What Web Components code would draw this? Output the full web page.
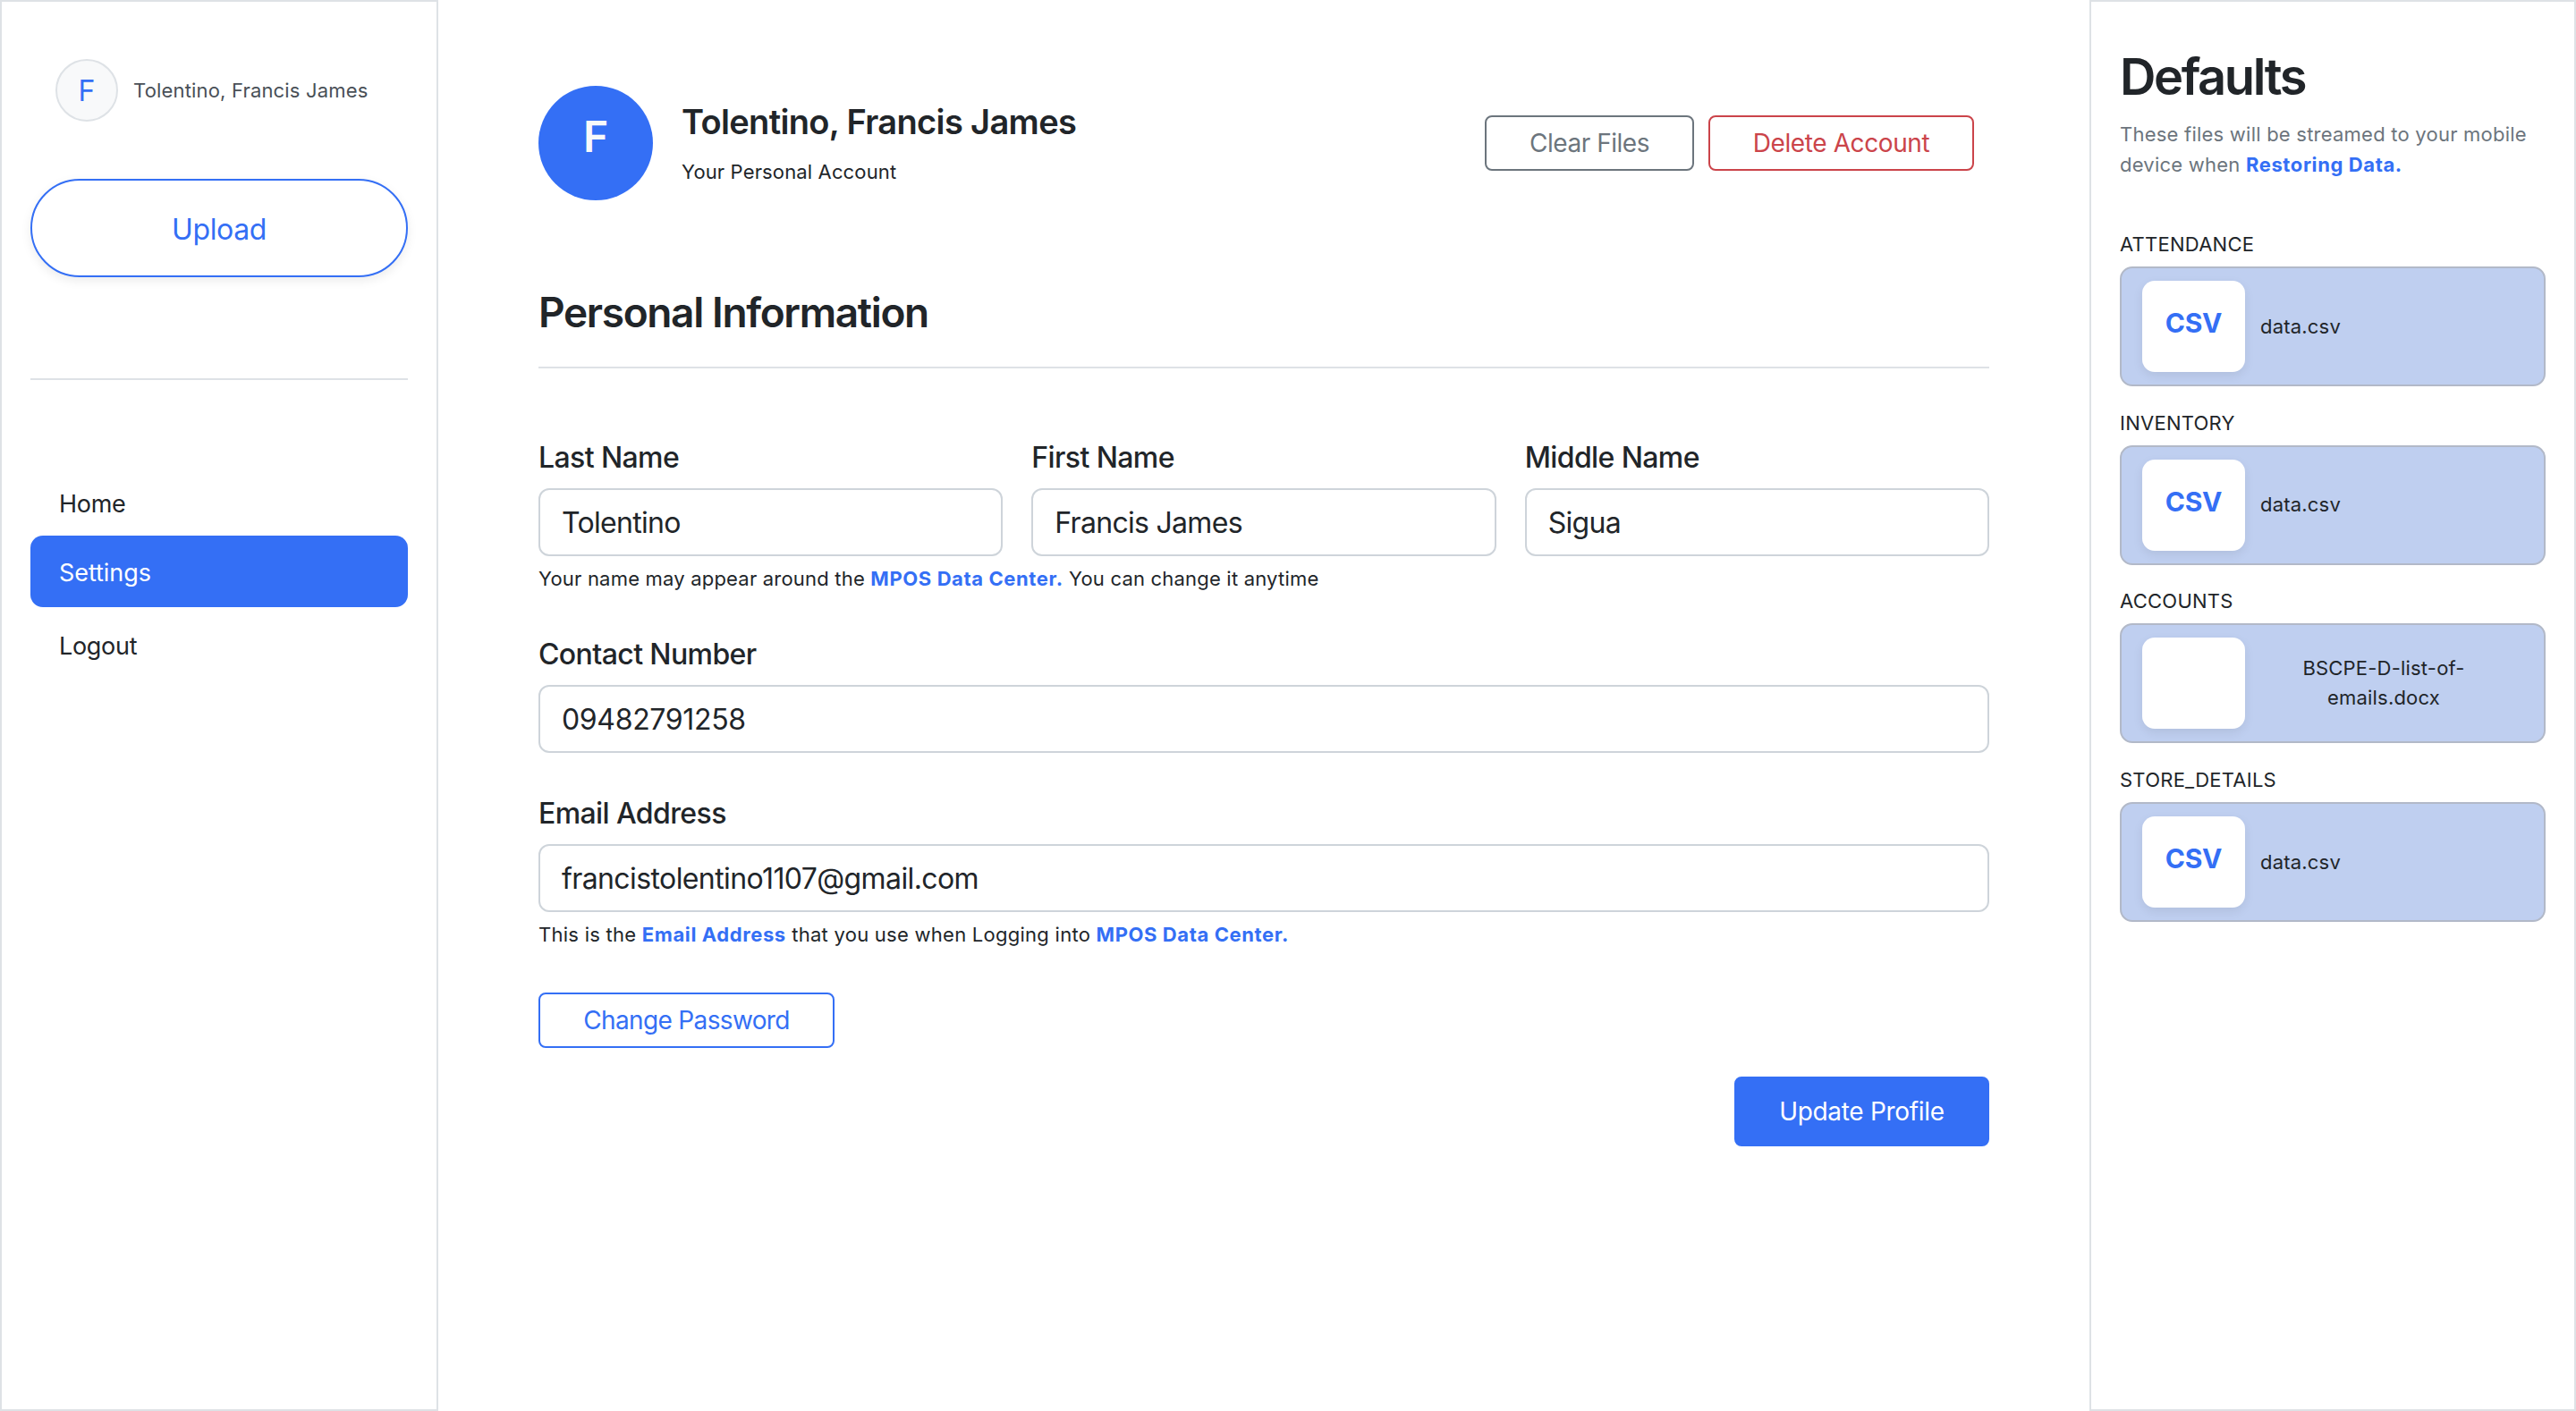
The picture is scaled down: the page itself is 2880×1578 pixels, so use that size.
<!DOCTYPE html>
<html lang="en"><head><meta charset="utf-8"><title>Settings</title>
<style>
html,body{margin:0;height:100%;background:#fff}
body{font-family:Inter,"Liberation Sans",sans-serif;color:#212529;--blue:#346ff5;--line:#dee2e6}
app-shell{height:1578px}
</style></head><body>
<app-shell>
  <side-nav slot="left"></side-nav>
  <profile-form></profile-form>
  <defaults-panel slot="right">
    <file-slot label="ATTENDANCE" name="data.csv" kind="CSV"></file-slot>
    <file-slot label="INVENTORY" name="data.csv" kind="CSV"></file-slot>
    <file-slot label="ACCOUNTS" name="BSCPE-D-list-of-emails.docx" kind=""></file-slot>
    <file-slot label="STORE_DETAILS" name="data.csv" kind="CSV"></file-slot>
  </defaults-panel>
</app-shell>
<script>
function el(name, css, html, setup){
  customElements.define(name, class extends HTMLElement{
    constructor(){super();const r=this.attachShadow({mode:'open'});r.innerHTML='<style>'+css+'</style>'+(typeof html==='function'?html(this):html);}
    connectedCallback(){ if(setup) setup(this); }
  });
}
el('app-shell',`:host{display:grid;grid-template-columns:490px 1fr 544px;box-sizing:border-box}`,
 `<slot name="left"></slot><slot></slot><slot name="right"></slot>`);

el('side-nav',`
:host{display:block;box-sizing:border-box;height:1578px;border:2px solid var(--line);padding:64px 32px 0 32px}
.me{display:flex;align-items:center;gap:17px;padding-left:28px;height:70px}
.av{width:70px;height:70px;box-sizing:border-box;border-radius:50%;border:2px solid var(--line);background:#f8f9fa;color:var(--blue);display:flex;align-items:center;justify-content:center;font-size:32px}
.nm{font-size:22px;color:#495057;letter-spacing:.17px}
.up{margin-top:64px;height:110px;box-sizing:border-box;border:2px solid var(--blue);border-radius:55px;background:#fff;color:var(--blue);font-size:32px;letter-spacing:-.4px;padding-top:2px;display:flex;align-items:center;justify-content:center;box-shadow:0 4px 12px rgba(0,0,0,.08)}
hr{border:0;height:2px;background:var(--line);margin:113px 0 0}
nav{margin-top:102px;display:flex;flex-direction:column}
a{display:flex;align-items:center;padding-left:32px;font-size:27px;letter-spacing:-.3px;border-radius:14px;color:#212529}
a.h{height:72px}
a.on{height:80px;background:var(--blue);color:#fff;padding-top:2px;box-sizing:border-box;letter-spacing:-.05px}
a.l{height:86px}
`,`<div class="me"><div class="av">F</div><div class="nm">Tolentino, Francis James</div></div>
<div class="up">Upload</div><hr>
<nav><a class="h">Home</a><a class="on">Settings</a><a class="l">Logout</a></nav>`);

el('profile-form',`
:host{display:block;box-sizing:border-box;padding:96px 112px 0 112px}
.head{display:flex;align-items:flex-start;justify-content:space-between}
.who{display:flex;gap:32px}
.av{width:128px;height:128px;border-radius:50%;background:var(--blue);color:#f8f9fa;display:flex;align-items:center;justify-content:center;font-size:48px;font-weight:600;padding-bottom:16px;box-sizing:border-box}
h1{margin:16px 0 0;font-size:38px;font-weight:600;line-height:48px;letter-spacing:-.65px}
.sub{margin:16px 0 0;font-size:22px;line-height:32px;letter-spacing:.14px}
.acts{display:flex;gap:16px;margin:33px 17px 0 0}
h2{margin:95px 0 0;font-size:46px;font-weight:600;line-height:60px;letter-spacing:-1.35px}
.rule{height:2px;background:var(--line);margin-top:31px}
.row{display:grid;grid-template-columns:repeat(3,1fr);gap:32px;margin-top:80px}
label{display:block;font-size:32px;font-weight:550;line-height:40px;margin-bottom:14px;letter-spacing:-.6px}
.v{display:flex;align-items:center;box-sizing:border-box;height:76px;border:2px solid #ced4da;border-radius:12px;padding:0 24px;font-size:32px;background:#fff;letter-spacing:-.7px}
.help{font-size:22px;line-height:32px;margin-top:9px;letter-spacing:.2px}
b{color:var(--blue);font-weight:700;letter-spacing:.6px}
.foot{display:flex;justify-content:flex-end;margin-top:32px}
`,`<div class="head"><div class="who"><div class="av">F</div><div><h1>Tolentino, Francis James</h1><p class="sub">Your Personal Account</p></div></div>
<div class="acts"><ui-btn tone="gray" w="234">Clear Files</ui-btn><ui-btn tone="red" w="297">Delete Account</ui-btn></div></div>
<h2>Personal Information</h2><div class="rule"></div>
<div class="row">
<div><label>Last Name</label><div class="v">Tolentino</div></div>
<div><label>First Name</label><div class="v">Francis James</div></div>
<div><label>Middle Name</label><div class="v">Sigua</div></div></div>
<div class="help">Your name may appear around the <b>MPOS Data Center.</b> You can change it anytime</div>
<div style="margin-top:49px"><label>Contact Number</label><div class="v" style="letter-spacing:-.33px">09482791258</div></div>
<div style="margin-top:48px"><label>Email Address</label><div class="v" style="letter-spacing:-.6px">francistolentino1107@gmail.com</div></div>
<div class="help" style="letter-spacing:.26px">This is the <b>Email Address</b> that you use when Logging into <b>MPOS Data Center.</b></div>
<div style="margin-top:49px;display:flex"><ui-btn tone="blue" w="331">Change Password</ui-btn></div>
<div class="foot"><ui-btn tone="solid" w="285" h="78">Update Profile</ui-btn></div>`);

el('ui-btn',`
:host{display:inline-flex;box-sizing:border-box;align-items:center;justify-content:center;height:62px;border:2px solid currentColor;border-radius:8px;font-size:28px;letter-spacing:-.42px;background:#fff}
:host([tone=gray]){color:#6c757d;letter-spacing:-.47px}
:host([tone=red]){color:#cb444a;letter-spacing:-.4px}
:host([tone=blue]){color:var(--blue);letter-spacing:-.65px}
:host([tone=solid]){color:#fff;background:var(--blue);border-color:var(--blue);letter-spacing:-.3px}
`,`<slot></slot>`,e=>{e.style.width=e.getAttribute('w')+'px';if(e.getAttribute('h'))e.style.height=e.getAttribute('h')+'px';});

el('defaults-panel',`
:host{display:block;box-sizing:border-box;height:1578px;border:2px solid var(--line);padding:50px 32px 0 32px}
h3{margin:0;font-size:56px;font-weight:600;line-height:68px;letter-spacing:-2.4px}
p{margin:14px 0 0;font-size:22px;line-height:33.5px;color:#6c757d;letter-spacing:.23px}
b{color:var(--blue);font-weight:700;letter-spacing:.6px}
.list{margin-top:56px;display:flex;flex-direction:column;gap:24.7px}
`,`<h3>Defaults</h3><p>These files will be streamed to your mobile device when <b>Restoring Data.</b></p><div class="list"><slot></slot></div>`);

el('file-slot',`
:host{display:block}
.l{font-size:22px;line-height:32px;margin-bottom:9px;letter-spacing:.25px}
.c{box-sizing:border-box;height:134px;width:476px;background:#bfcff0;border:2px solid #b2b9c8;border-radius:14px;display:flex;align-items:center;padding:0 41px 0 23px;gap:17px}
.i{flex:none;width:115px;height:102px;border-radius:14px;background:#fff;box-shadow:0 4px 12px rgba(0,0,0,.08);display:flex;align-items:center;justify-content:center;color:var(--blue);font-size:30px;font-weight:700;padding-bottom:8px;box-sizing:border-box;letter-spacing:-.2px}
.n{font-size:22px;line-height:33px;text-align:center;letter-spacing:.2px}
`,e=>`<div class="l">${e.getAttribute('label')}</div><div class="c"><div class="i">${e.getAttribute('kind')}</div><div class="n">${e.getAttribute('name')}</div></div>`);
</script>
</body></html>
